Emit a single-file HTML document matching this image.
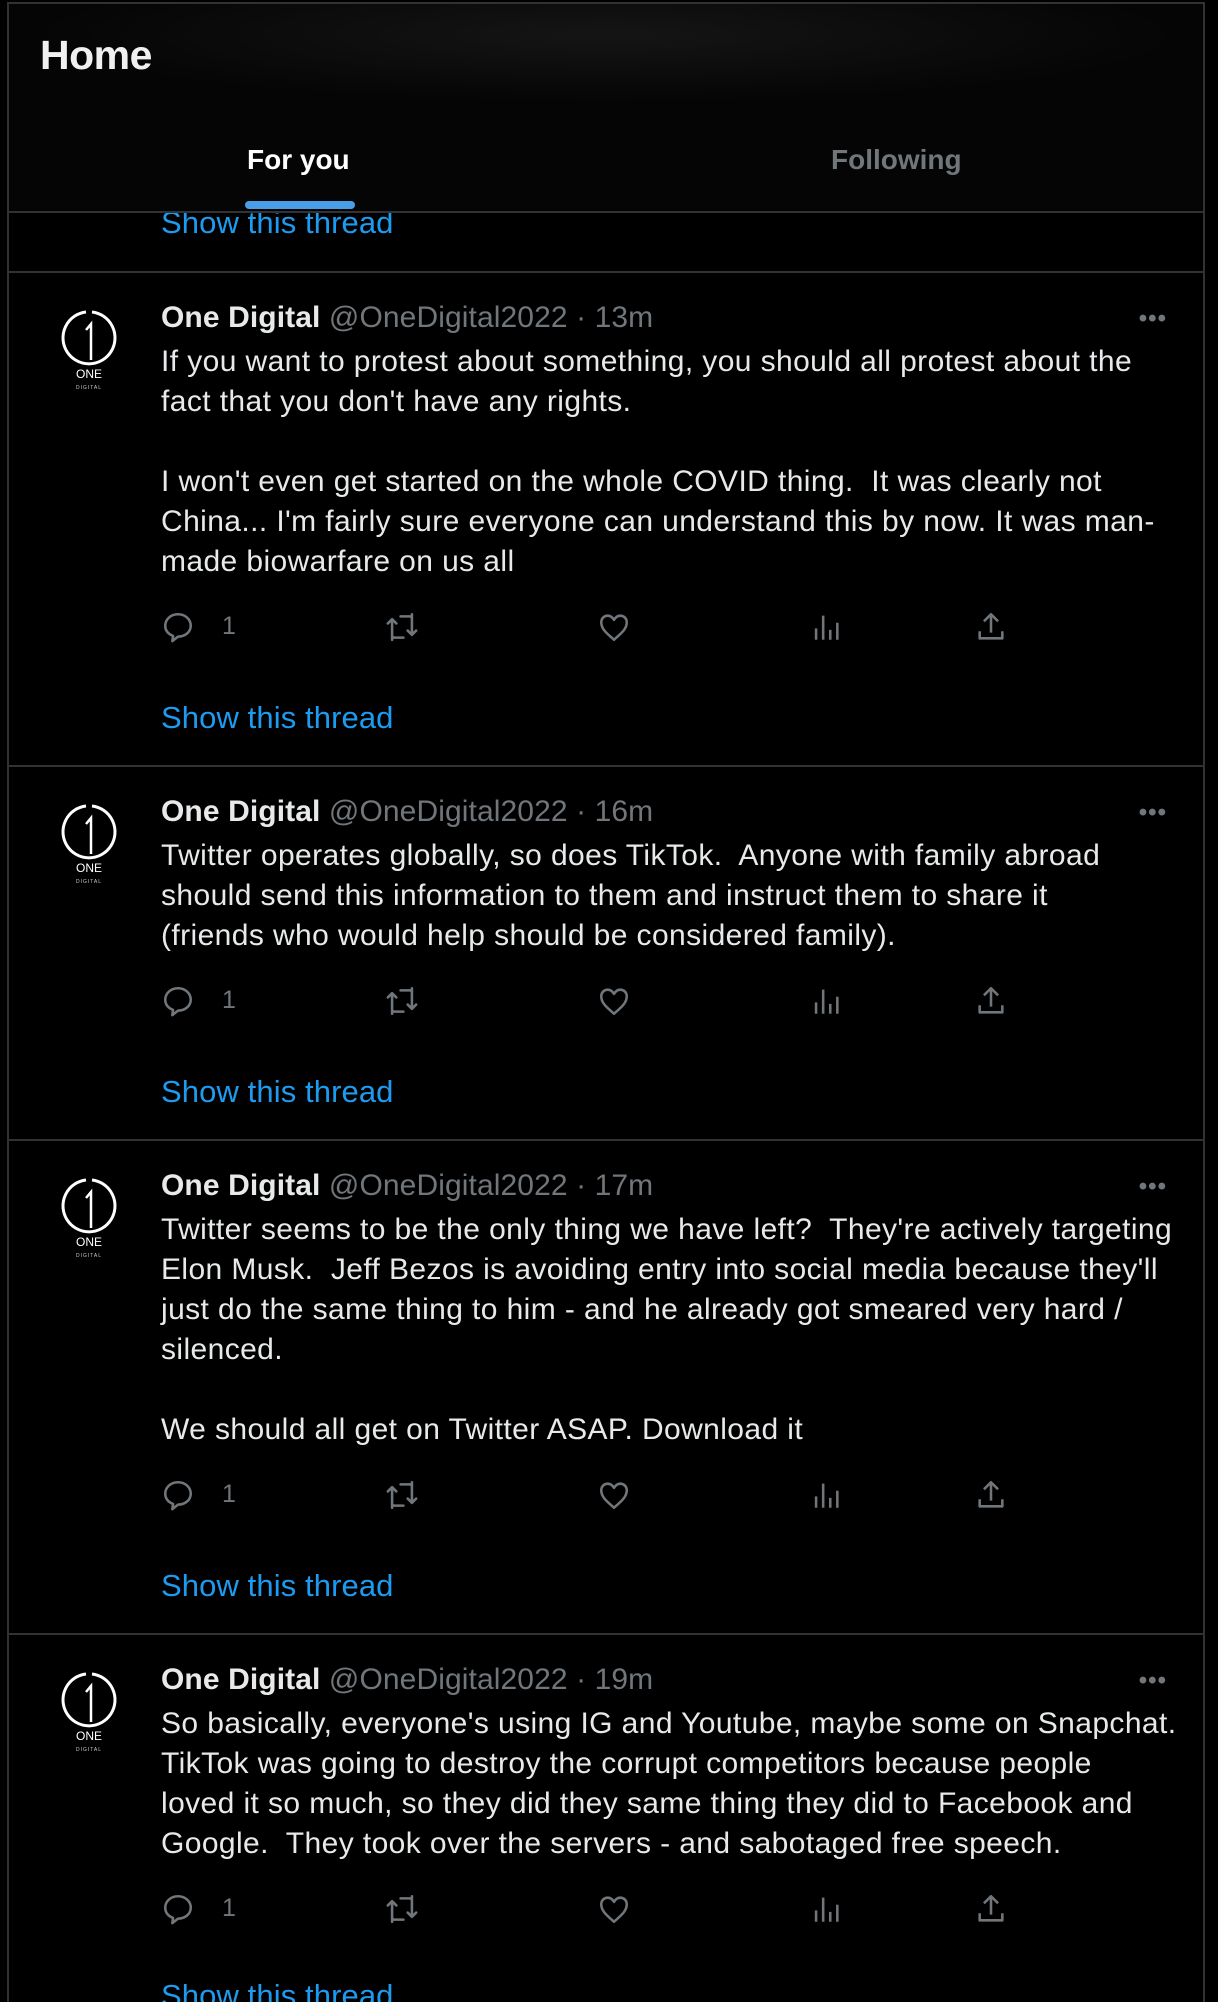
<!DOCTYPE html>
<html><head><meta charset="utf-8"><style>
*{margin:0;padding:0;box-sizing:border-box}
html,body{width:1218px;height:2002px;background:#000;overflow:hidden}
body{font-family:"Liberation Sans",sans-serif;color:#e7e9ea;position:relative}
.frame{position:absolute;left:7px;top:2px;width:1198px;height:2010px;border-left:2px solid #2f3336;border-right:2px solid #2f3336;border-top:2px solid #2f3336}
.header{position:absolute;left:9px;top:4px;width:1194px;height:209px;background:radial-gradient(ellipse 60% 40% at 50% 15%,#151515,#050505 80%);z-index:5;border-bottom:2px solid #2f3336}
.home{position:absolute;left:31px;top:28px;font-size:41px;font-weight:bold;color:#f0f0f0;letter-spacing:-0.5px}
.tab{position:absolute;top:140px;font-size:28px;font-weight:bold}
.ul{position:absolute;left:236px;top:197px;width:110px;height:8px;border-radius:4px;background:#4a9ee8}
.sep{position:absolute;left:9px;width:1194px;height:2px;background:#2f3336}
.tw{position:absolute;left:9px;width:1194px}
.av{position:absolute;left:50px;top:33px;width:60px;height:90px}
.body{position:absolute;left:152px;top:25px;width:1040px}
.nm{height:44px;line-height:40px;font-size:30px;white-space:nowrap;letter-spacing:0.1px}
.nm b{color:#e7e9ea}
.nm span{color:#71767b}
.tx{font-size:30px;line-height:40px;letter-spacing:0.4px;color:#e7e9ea;white-space:nowrap}
.act{position:relative;height:40px;margin-top:24px}
.act svg{position:absolute;top:4px;width:34px;height:34px}
.act .n{position:absolute;left:61px;top:6px;font-size:25px;color:#71767b}
.show{margin-top:52px;font-size:31px;line-height:40px;color:#1d9bf0;letter-spacing:0.1px}
.dots{position:absolute;right:36px;top:32px;color:#71767b;font-size:24px;letter-spacing:1px;font-weight:bold}
</style></head><body>
<div class="frame"></div>
<div class="header">
 <div class="home">Home</div>
 <div class="tab" style="left:238px;color:#fff">For you</div>
 <div class="tab" style="left:822px;color:#71767b">Following</div>
 <div class="ul"></div>
</div>
<div style="position:absolute;left:161px;top:205px;font-size:31px;letter-spacing:0.1px;color:#1d9bf0;z-index:1">Show this thread</div>
<div class="sep" style="top:271px"></div>

<svg width="0" height="0" style="position:absolute">
<defs>
<symbol id="av" viewBox="0 0 60 90">
 <path d="M27 6 A26 26 0 1 0 33 6" fill="none" stroke="#fff" stroke-width="3"/>
 <path d="M27 24 L32 18 L32 54" fill="none" stroke="#fff" stroke-width="2.5"/>
 <text x="30" y="72" text-anchor="middle" font-family="Liberation Sans" font-size="12" fill="#fff">ONE</text>
 <text x="30" y="83" text-anchor="middle" font-family="Liberation Sans" font-size="5" fill="#ccc" letter-spacing="1">DIGITAL</text>
</symbol>
<symbol id="rp" viewBox="0 0 24 24"><path d="M12 3C7 3 3 6.5 3 11c0 3.5 2.3 6 5.5 7.3L8 22l4-3.2c5 0 9-3.3 9-7.8S17 3 12 3z" fill="none" stroke="#71767b" stroke-width="1.8" stroke-linejoin="round"/></symbol>
<symbol id="rt" viewBox="0 0 24 24"><path d="M5 21V7M2 9.5L5 6.5 8 9.5M19 3v14M16 14.5l3 3 3-3M19 6c0-1-.5-1.5-1.5-1.5H11M5 18c0 1 .5 1.5 1.5 1.5H13" fill="none" stroke="#71767b" stroke-width="1.8" stroke-linecap="round" stroke-linejoin="round"/></symbol>
<symbol id="lk" viewBox="0 0 24 24"><path d="M12 21C7 16.5 3 13.5 3 8.7 3 6 5 4 7.5 4 9.5 4 11 5.2 12 7c1-1.8 2.5-3 4.5-3C19 4 21 6 21 8.7c0 4.8-4 7.8-9 12.3z" fill="none" stroke="#71767b" stroke-width="1.8" stroke-linejoin="round"/></symbol>
<symbol id="vw" viewBox="0 0 24 24"><path d="M5 13v8M10 4v17M15 14v7M20 9v12" stroke="#71767b" stroke-width="1.8"/></symbol>
<symbol id="sh" viewBox="0 0 24 24"><path d="M12 3v13M7 8l5-5 5 5M4 15v5h16v-5" fill="none" stroke="#71767b" stroke-width="1.8" stroke-linejoin="round"/></symbol>
</defs></svg>

<div class="tw" style="top:273px">
 <svg class="av"><use href="#av"/></svg>
 <div class="dots">•••</div>
 <div class="body">
  <div class="nm"><b>One Digital</b> <span>@OneDigital2022 · 13m</span></div>
  <div class="tx">If you want to protest about something, you should all protest about the<br>fact that you don't have any rights.<br>&nbsp;<br>I won't even get started on the whole COVID thing.&nbsp; It was clearly not<br>China... I'm fairly sure everyone can understand this by now. It was man-<br>made biowarfare on us all</div>
  <div class="act"><svg style="left:0px"><use href="#rp"/></svg><span class="n">1</span><svg style="left:224px"><use href="#rt"/></svg><svg style="left:436px"><use href="#lk"/></svg><svg style="left:648px"><use href="#vw"/></svg><svg style="left:813px"><use href="#sh"/></svg></div>
  <div class="show">Show this thread</div>
 </div>
</div>
<div class="sep" style="top:765px"></div>

<div class="tw" style="top:767px">
 <svg class="av"><use href="#av"/></svg>
 <div class="dots">•••</div>
 <div class="body">
  <div class="nm"><b>One Digital</b> <span>@OneDigital2022 · 16m</span></div>
  <div class="tx">Twitter operates globally, so does TikTok.&nbsp; Anyone with family abroad<br>should send this information to them and instruct them to share it<br>(friends who would help should be considered family).</div>
  <div class="act"><svg style="left:0px"><use href="#rp"/></svg><span class="n">1</span><svg style="left:224px"><use href="#rt"/></svg><svg style="left:436px"><use href="#lk"/></svg><svg style="left:648px"><use href="#vw"/></svg><svg style="left:813px"><use href="#sh"/></svg></div>
  <div class="show">Show this thread</div>
 </div>
</div>
<div class="sep" style="top:1139px"></div>

<div class="tw" style="top:1141px">
 <svg class="av"><use href="#av"/></svg>
 <div class="dots">•••</div>
 <div class="body">
  <div class="nm"><b>One Digital</b> <span>@OneDigital2022 · 17m</span></div>
  <div class="tx">Twitter seems to be the only thing we have left?&nbsp; They're actively targeting<br>Elon Musk.&nbsp; Jeff Bezos is avoiding entry into social media because they'll<br>just do the same thing to him - and he already got smeared very hard /<br>silenced.<br>&nbsp;<br>We should all get on Twitter ASAP. Download it</div>
  <div class="act"><svg style="left:0px"><use href="#rp"/></svg><span class="n">1</span><svg style="left:224px"><use href="#rt"/></svg><svg style="left:436px"><use href="#lk"/></svg><svg style="left:648px"><use href="#vw"/></svg><svg style="left:813px"><use href="#sh"/></svg></div>
  <div class="show">Show this thread</div>
 </div>
</div>
<div class="sep" style="top:1633px"></div>

<div class="tw" style="top:1635px">
 <svg class="av"><use href="#av"/></svg>
 <div class="dots">•••</div>
 <div class="body">
  <div class="nm"><b>One Digital</b> <span>@OneDigital2022 · 19m</span></div>
  <div class="tx">So basically, everyone's using IG and Youtube, maybe some on Snapchat.<br>TikTok was going to destroy the corrupt competitors because people<br>loved it so much, so they did they same thing they did to Facebook and<br>Google.&nbsp; They took over the servers - and sabotaged free speech.</div>
  <div class="act"><svg style="left:0px"><use href="#rp"/></svg><span class="n">1</span><svg style="left:224px"><use href="#rt"/></svg><svg style="left:436px"><use href="#lk"/></svg><svg style="left:648px"><use href="#vw"/></svg><svg style="left:813px"><use href="#sh"/></svg></div>
  <div class="show" style="margin-top:48px">Show this thread</div>
 </div>
</div>
</body></html>
